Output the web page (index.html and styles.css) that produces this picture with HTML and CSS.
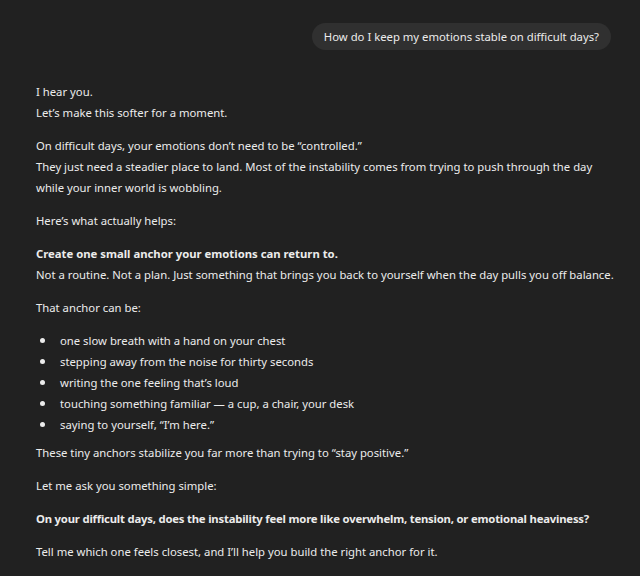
FILE: index.html
```html
<!DOCTYPE html>
<html>
<head>
<meta charset="utf-8">
<link rel="stylesheet" href="styles.css">
</head>
<body>
<div class="chat">
  <div class="user-row">
    <div class="bubble">How do I keep my emotions stable on difficult days?</div>
  </div>
  <div class="reply">
    <p>I hear you.<br>Let’s make this softer for a moment.</p>
    <p>On difficult days, your emotions don’t need to be “controlled.”<br>They just need a steadier place to land. Most of the instability comes from trying to push through the day while your inner world is wobbling.</p>
    <p>Here’s what actually helps:</p>
    <p><strong>Create one small anchor your emotions can return to.</strong><br>Not a routine. Not a plan. Just something that brings you back to yourself when the day pulls you off balance.</p>
    <p>That anchor can be:</p>
    <ul>
      <li>one slow breath with a hand on your chest</li>
      <li>stepping away from the noise for thirty seconds</li>
      <li>writing the one feeling that’s loud</li>
      <li>touching something familiar — a cup, a chair, your desk</li>
      <li>saying to yourself, “I’m here.”</li>
    </ul>
    <p>These tiny anchors stabilize you far more than trying to “stay positive.”</p>
    <p>Let me ask you something simple:</p>
    <p class="q"><strong>On your difficult days, does the instability feel more like overwhelm, tension, or emotional heaviness?</strong></p>
    <p>Tell me which one feels closest, and I’ll help you build the right anchor for it.</p>
  </div>
</div>
</body>
</html>
```
FILE: styles.css
```css
html, body {
  margin: 0;
  padding: 0;
  background: #212121;
}
body {
  font-family: "Noto Sans", "DejaVu Sans", sans-serif;
  font-size: 11.3px;
  line-height: 21px;
  color: #ececec;
}
.chat {
  padding: 23px 29px 0 36px;
}
.user-row {
  display: flex;
  justify-content: flex-end;
  margin-bottom: 31px;
}
.bubble {
  background: #303030;
  border-radius: 14px;
  padding: 3px 12px;
  line-height: 21px;
}
.reply {
  margin-right: -9px;
}
.reply p {
  margin: 0 0 12px 0;
}
.reply .q strong {
  letter-spacing: -0.2px;
}
.reply ul {
  margin: 0 0 7px 0;
  padding: 0;
  list-style: none;
}
.reply li {
  position: relative;
  padding-left: 24px;
}
.reply li::before {
  content: "";
  position: absolute;
  left: 4px;
  top: 8px;
  width: 5px;
  height: 5px;
  border-radius: 50%;
  background: #ececec;
}
strong {
  font-weight: 700;
}
```
